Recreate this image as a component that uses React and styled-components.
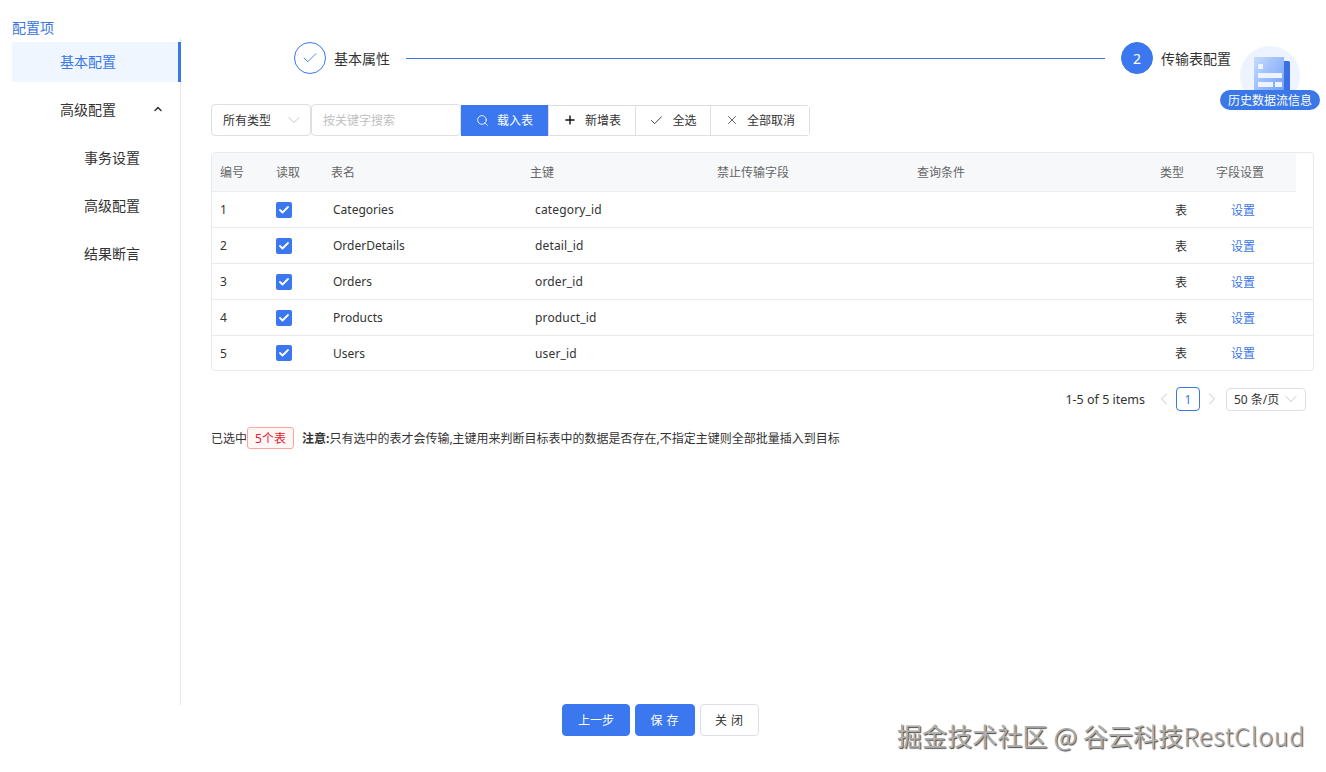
import React from "react";
import styled, { createGlobalStyle } from "styled-components";
import { Check, ChevronDown, ChevronLeft, ChevronRight, ChevronUp, Plus, Search, X } from "lucide-react";

const FONT = `"Noto Sans", "Noto Sans CJK SC", sans-serif`;
const COLS = "56px 55px 199px 187px 200px 243px 56px 1fr";

const GlobalStyle = createGlobalStyle`
  html, body { margin: 0; padding: 0; background: #fff; }
  body { font-family: ${FONT}; color: #333; font-size: 12px; }
  * { box-sizing: border-box; }
`;

const Page = styled.div`
  position: relative;
  width: 1326px;
  height: 772px;
  overflow: hidden;
  display: flex;
  flex-direction: column;
`;

const Body = styled.div`
  display: flex;
  height: 705px;
  padding-top: 18px;
`;

const Side = styled.aside`
  width: 181px;
  flex: none;
  padding-left: 12px;
`;

const SideTitle = styled.div`
  height: 20px;
  line-height: 20px;
  font-size: 14px;
  color: #3a78e0;
`;

const Menu = styled.div`
  border-right: 1px solid #e4e7ec;
  height: 667px;
  margin-left: -12px;
  padding-left: 12px;
  padding-top: 4px;
`;

const MenuItem = styled.div`
  display: flex;
  align-items: center;
  justify-content: space-between;
  height: 40px;
  margin-bottom: 8px;
  padding: 0 16px 2px ${(p) => (p.$sub ? 72 : 48)}px;
  font-size: 14px;
  color: ${(p) => (p.$active ? "#3b78e7" : "#333")};
  background: ${(p) => (p.$active ? "#eff6ff" : "transparent")};
  border-right: ${(p) => (p.$active ? "3px solid #3b78e7" : "none")};
  margin-right: ${(p) => (p.$active ? "-1px" : "0")};
`;

const Main = styled.main`
  flex: 1;
  min-width: 0;
  padding: 24px 12px 0 30px;
`;

const Steps = styled.div`
  display: flex;
  align-items: center;
  width: 937px;
  height: 32px;
  margin-left: 83px;
`;

const StepDot = styled.div`
  width: 32px;
  height: 32px;
  flex: none;
  border-radius: 50%;
  display: flex;
  align-items: center;
  justify-content: center;
  font-size: 14px;
  border: 1px solid #3b78e7;
  color: ${(p) => (p.$current ? "#fff" : "#3b78e7")};
  background: ${(p) => (p.$current ? "#3b78f0" : "#fff")};
`;

const StepLabel = styled.div`
  margin-left: 8px;
  font-size: 14px;
  color: #333;
  white-space: nowrap;
`;

const StepLine = styled.div`
  flex: 1;
  height: 1px;
  background: #3b78e7;
  margin: 0 16px;
`;

const Toolbar = styled.div`
  display: flex;
  align-items: center;
  margin-top: 30px;
  height: 32px;
`;

const Select = styled.div`
  width: 100px;
  height: 32px;
  padding: 0 6px 0 11px;
  border: 1px solid #dcdfe6;
  border-radius: 4px;
  display: flex;
  align-items: center;
  justify-content: space-between;
  color: #333;
  svg { color: #bbb; }
`;

const SearchBox = styled.div`
  width: 150px;
  height: 32px;
  padding: 0 11px;
  border: 1px solid #dcdfe6;
  border-radius: 4px;
  display: flex;
  align-items: center;
  color: #bfbfbf;
`;

const ToolGroup = styled.div`
  display: flex;
  height: 31px;
  border: 1px solid #dcdfe6;
  border-left: none;
  border-radius: 0 4px 4px 0;
`;

const ToolButton = styled.div`
  width: ${(p) => p.$w}px;
  display: flex;
  align-items: center;
  justify-content: center;
  gap: ${(p) => p.$gap || 8}px;
  color: ${(p) => (p.$primary ? "#fff" : "#333")};
  background: ${(p) => (p.$primary ? "#3b78f0" : "#fff")};
  margin: ${(p) => (p.$primary ? "-1px 0" : "0")};
  & + & { border-left: ${(p) => (p.$first ? "none" : "1px solid #dcdfe6")}; }
`;

const Table = styled.div`
  margin-top: 16px;
  width: 1103px;
  border: 1px solid #e8eaee;
  border-radius: 4px;
`;

const HeadRow = styled.div`
  display: grid;
  grid-template-columns: ${COLS};
  align-items: center;
  width: 1084px;
  height: 39px;
  padding-left: 8px;
  background: #f7f8fa;
  color: #666;
  border-bottom: 1px solid #eceef1;
`;

const Row = styled.div`
  display: grid;
  grid-template-columns: ${COLS};
  align-items: center;
  height: ${(p) => (p.$last ? 34 : 36)}px;
  padding-left: 8px;
  color: #333;
  border-bottom: ${(p) => (p.$last ? "none" : "1px solid #e8eaee")};
`;

const Cell = styled.div`
  padding-left: ${(p) => p.$pad || 0}px;
  white-space: nowrap;
`;

const KeyCell = styled(Cell)`
  letter-spacing: 0.15px;
`;

const LinkCell = styled(Cell)`
  color: #3b78e7;
`;

const CheckBox = styled.div`
  width: 16px;
  height: 16px;
  border-radius: 2px;
  background: #3b78f0;
  color: #fff;
  display: flex;
  align-items: center;
  justify-content: center;
`;

const Pager = styled.div`
  display: flex;
  align-items: center;
  justify-content: flex-end;
  height: 24px;
  margin-top: 16px;
  padding-right: 8px;
  color: #333;
  svg { color: #bbb; }
`;

const PagerInfo = styled.span`
  margin-right: 9px;
  font-size: 12.5px;
`;

const PageNum = styled.div`
  width: 24px;
  height: 24px;
  margin: 0 2px;
  border: 1px solid #3b78e7;
  border-radius: 4px;
  color: #3b78e7;
  display: flex;
  align-items: center;
  justify-content: center;
`;

const PageSize = styled.div`
  width: 80px;
  height: 23px;
  margin-left: 4px;
  padding: 0 4px 0 7px;
  border: 1px solid #dcdfe6;
  border-radius: 4px;
  display: flex;
  align-items: center;
  justify-content: space-between;
`;

const Note = styled.div`
  display: flex;
  align-items: center;
  margin-top: 16px;
  height: 22px;
  color: #333;
  strong { font-weight: 700; }
`;

const Tag = styled.span`
  height: 22px;
  width: 47px;
  margin-right: 8px;
  border: 1px solid #ffa39e;
  border-radius: 3px;
  background: #fff7f6;
  color: #e5202e;
  display: flex;
  align-items: center;
  justify-content: center;
`;

const Footer = styled.footer`
  display: flex;
  justify-content: center;
  gap: 5px;
  height: 32px;
  margin-top: -1px;
  padding-right: 5px;
`;

const FootButton = styled.div`
  width: ${(p) => p.$w}px;
  height: 32px;
  padding-left: ${(p) => (p.$spaced ? "3px" : "0")};
  border-radius: 4px;
  display: flex;
  align-items: center;
  justify-content: center;
  letter-spacing: ${(p) => (p.$spaced ? "4px" : "0")};
  color: ${(p) => (p.$primary ? "#fff" : "#333")};
  background: ${(p) => (p.$primary ? "#3b78f0" : "#fff")};
  border: 1px solid ${(p) => (p.$primary ? "#3b78f0" : "#dcdfe6")};
`;

const HistoryFloat = styled.div`
  position: absolute;
  left: 1220px;
  top: 46px;
  width: 100px;
  height: 64px;
`;

const HistoryDisc = styled.div`
  position: absolute;
  left: 20px;
  top: 0;
  width: 60px;
  height: 60px;
  border-radius: 50%;
  background: #eef4ff;
`;

const HistoryBadge = styled.div`
  position: absolute;
  left: 0;
  bottom: 0;
  width: 100px;
  height: 20px;
  border-radius: 10px;
  background: #3b78e7;
  color: #fff;
  display: flex;
  align-items: center;
  justify-content: center;
`;

const Watermark = styled.div`
  position: absolute;
  left: 897px;
  top: 717px;
  font-size: 25px;
  letter-spacing: 0.12px;
  line-height: 36px;
  white-space: nowrap;
  color: #aeaeae;
  text-shadow: 1px 1px 1px #484848;
  font-family: "Noto Sans CJK SC", "Noto Sans", sans-serif;
`;

const WatermarkLatin = styled.span`
  font-weight: 300;
  letter-spacing: 0.75px;
`;

const rows = [
  ["1", "Categories", "category_id"],
  ["2", "OrderDetails", "detail_id"],
  ["3", "Orders", "order_id"],
  ["4", "Products", "product_id"],
  ["5", "Users", "user_id"],
];

function HistoryIcon() {
  return (
    <svg width="44" height="46" viewBox="0 0 44 46" style={{ position: "absolute", left: 32, top: 8 }}>
      <defs>
        <linearGradient id="sheet" x1="0" y1="0" x2="1" y2="1">
          <stop offset="0" stopColor="#c7dbff" />
          <stop offset="1" stopColor="#6a9bf7" />
        </linearGradient>
      </defs>
      <rect x="26" y="7" width="12" height="36" rx="1.5" fill="#3a6fe6" />
      <rect x="2" y="3" width="30" height="40" fill="url(#sheet)" />
      <rect x="6" y="10" width="5" height="5" fill="#eef4ff" />
      <rect x="6" y="19" width="24" height="5" fill="#eef4ff" />
      <rect x="6" y="28" width="15" height="5" fill="#eef4ff" />
      <rect x="23" y="28" width="7" height="5" fill="#eef4ff" />
    </svg>
  );
}

export default function App() {
  return (
    <Page>
      <GlobalStyle />
      <Body>
        <Side>
          <SideTitle>配置项</SideTitle>
          <Menu>
            <MenuItem $active>基本配置</MenuItem>
            <MenuItem>
              高级配置
              <ChevronUp size={12} strokeWidth={3} color="#333" />
            </MenuItem>
            <MenuItem $sub>事务设置</MenuItem>
            <MenuItem $sub>高级配置</MenuItem>
            <MenuItem $sub>结果断言</MenuItem>
          </Menu>
        </Side>
        <Main>
          <Steps>
            <StepDot><Check size={18} strokeWidth={1.2} /></StepDot>
            <StepLabel>基本属性</StepLabel>
            <StepLine />
            <StepDot $current>2</StepDot>
            <StepLabel>传输表配置</StepLabel>
          </Steps>
          <Toolbar>
            <Select>所有类型<ChevronDown size={20} strokeWidth={1} /></Select>
            <SearchBox>按关键字搜索</SearchBox>
            <ToolGroup>
              <ToolButton $primary $w={87}><Search size={13} strokeWidth={1.6} />载入表</ToolButton>
              <ToolButton $first $w={87}><Plus size={14} strokeWidth={2.4} color="#111" />新增表</ToolButton>
              <ToolButton $w={75}><Check size={15} strokeWidth={1.5} />全选</ToolButton>
              <ToolButton $w={99}><X size={14} strokeWidth={1.3} />全部取消</ToolButton>
            </ToolGroup>
          </Toolbar>
          <Table>
            <HeadRow>
              <Cell>编号</Cell>
              <Cell>读取</Cell>
              <Cell>表名</Cell>
              <Cell>主键</Cell>
              <Cell>禁止传输字段</Cell>
              <Cell>查询条件</Cell>
              <Cell>类型</Cell>
              <Cell>字段设置</Cell>
            </HeadRow>
            {rows.map(([num, name, key], i) => (
              <Row key={num} $last={i === 4}>
                <Cell>{num}</Cell>
                <Cell><CheckBox><Check size={12} strokeWidth={3.6} /></CheckBox></Cell>
                <Cell $pad={2}>{name}</Cell>
                <KeyCell $pad={5}>{key}</KeyCell>
                <Cell />
                <Cell />
                <Cell $pad={15}>表</Cell>
                <LinkCell $pad={15}>设置</LinkCell>
              </Row>
            ))}
          </Table>
          <Pager>
            <PagerInfo>1-5 of 5 items</PagerInfo>
            <ChevronLeft size={20} strokeWidth={1} />
            <PageNum>1</PageNum>
            <ChevronRight size={20} strokeWidth={1} />
            <PageSize>50 条/页<ChevronDown size={20} strokeWidth={1} /></PageSize>
          </Pager>
          <Note>
            已选中<Tag>5个表</Tag>
            <span><strong>注意:</strong>只有选中的表才会传输,主键用来判断目标表中的数据是否存在,不指定主键则全部批量插入到目标</span>
          </Note>
        </Main>
      </Body>
      <Footer>
        <FootButton $primary $w={68}>上一步</FootButton>
        <FootButton $primary $spaced $w={60}>保存</FootButton>
        <FootButton $spaced $w={59}>关闭</FootButton>
      </Footer>
      <HistoryFloat>
        <HistoryDisc />
        <HistoryIcon />
        <HistoryBadge>历史数据流信息</HistoryBadge>
      </HistoryFloat>
      <Watermark>掘金技术社区 @ 谷云科技<WatermarkLatin>RestCloud</WatermarkLatin></Watermark>
    </Page>
  );
}
